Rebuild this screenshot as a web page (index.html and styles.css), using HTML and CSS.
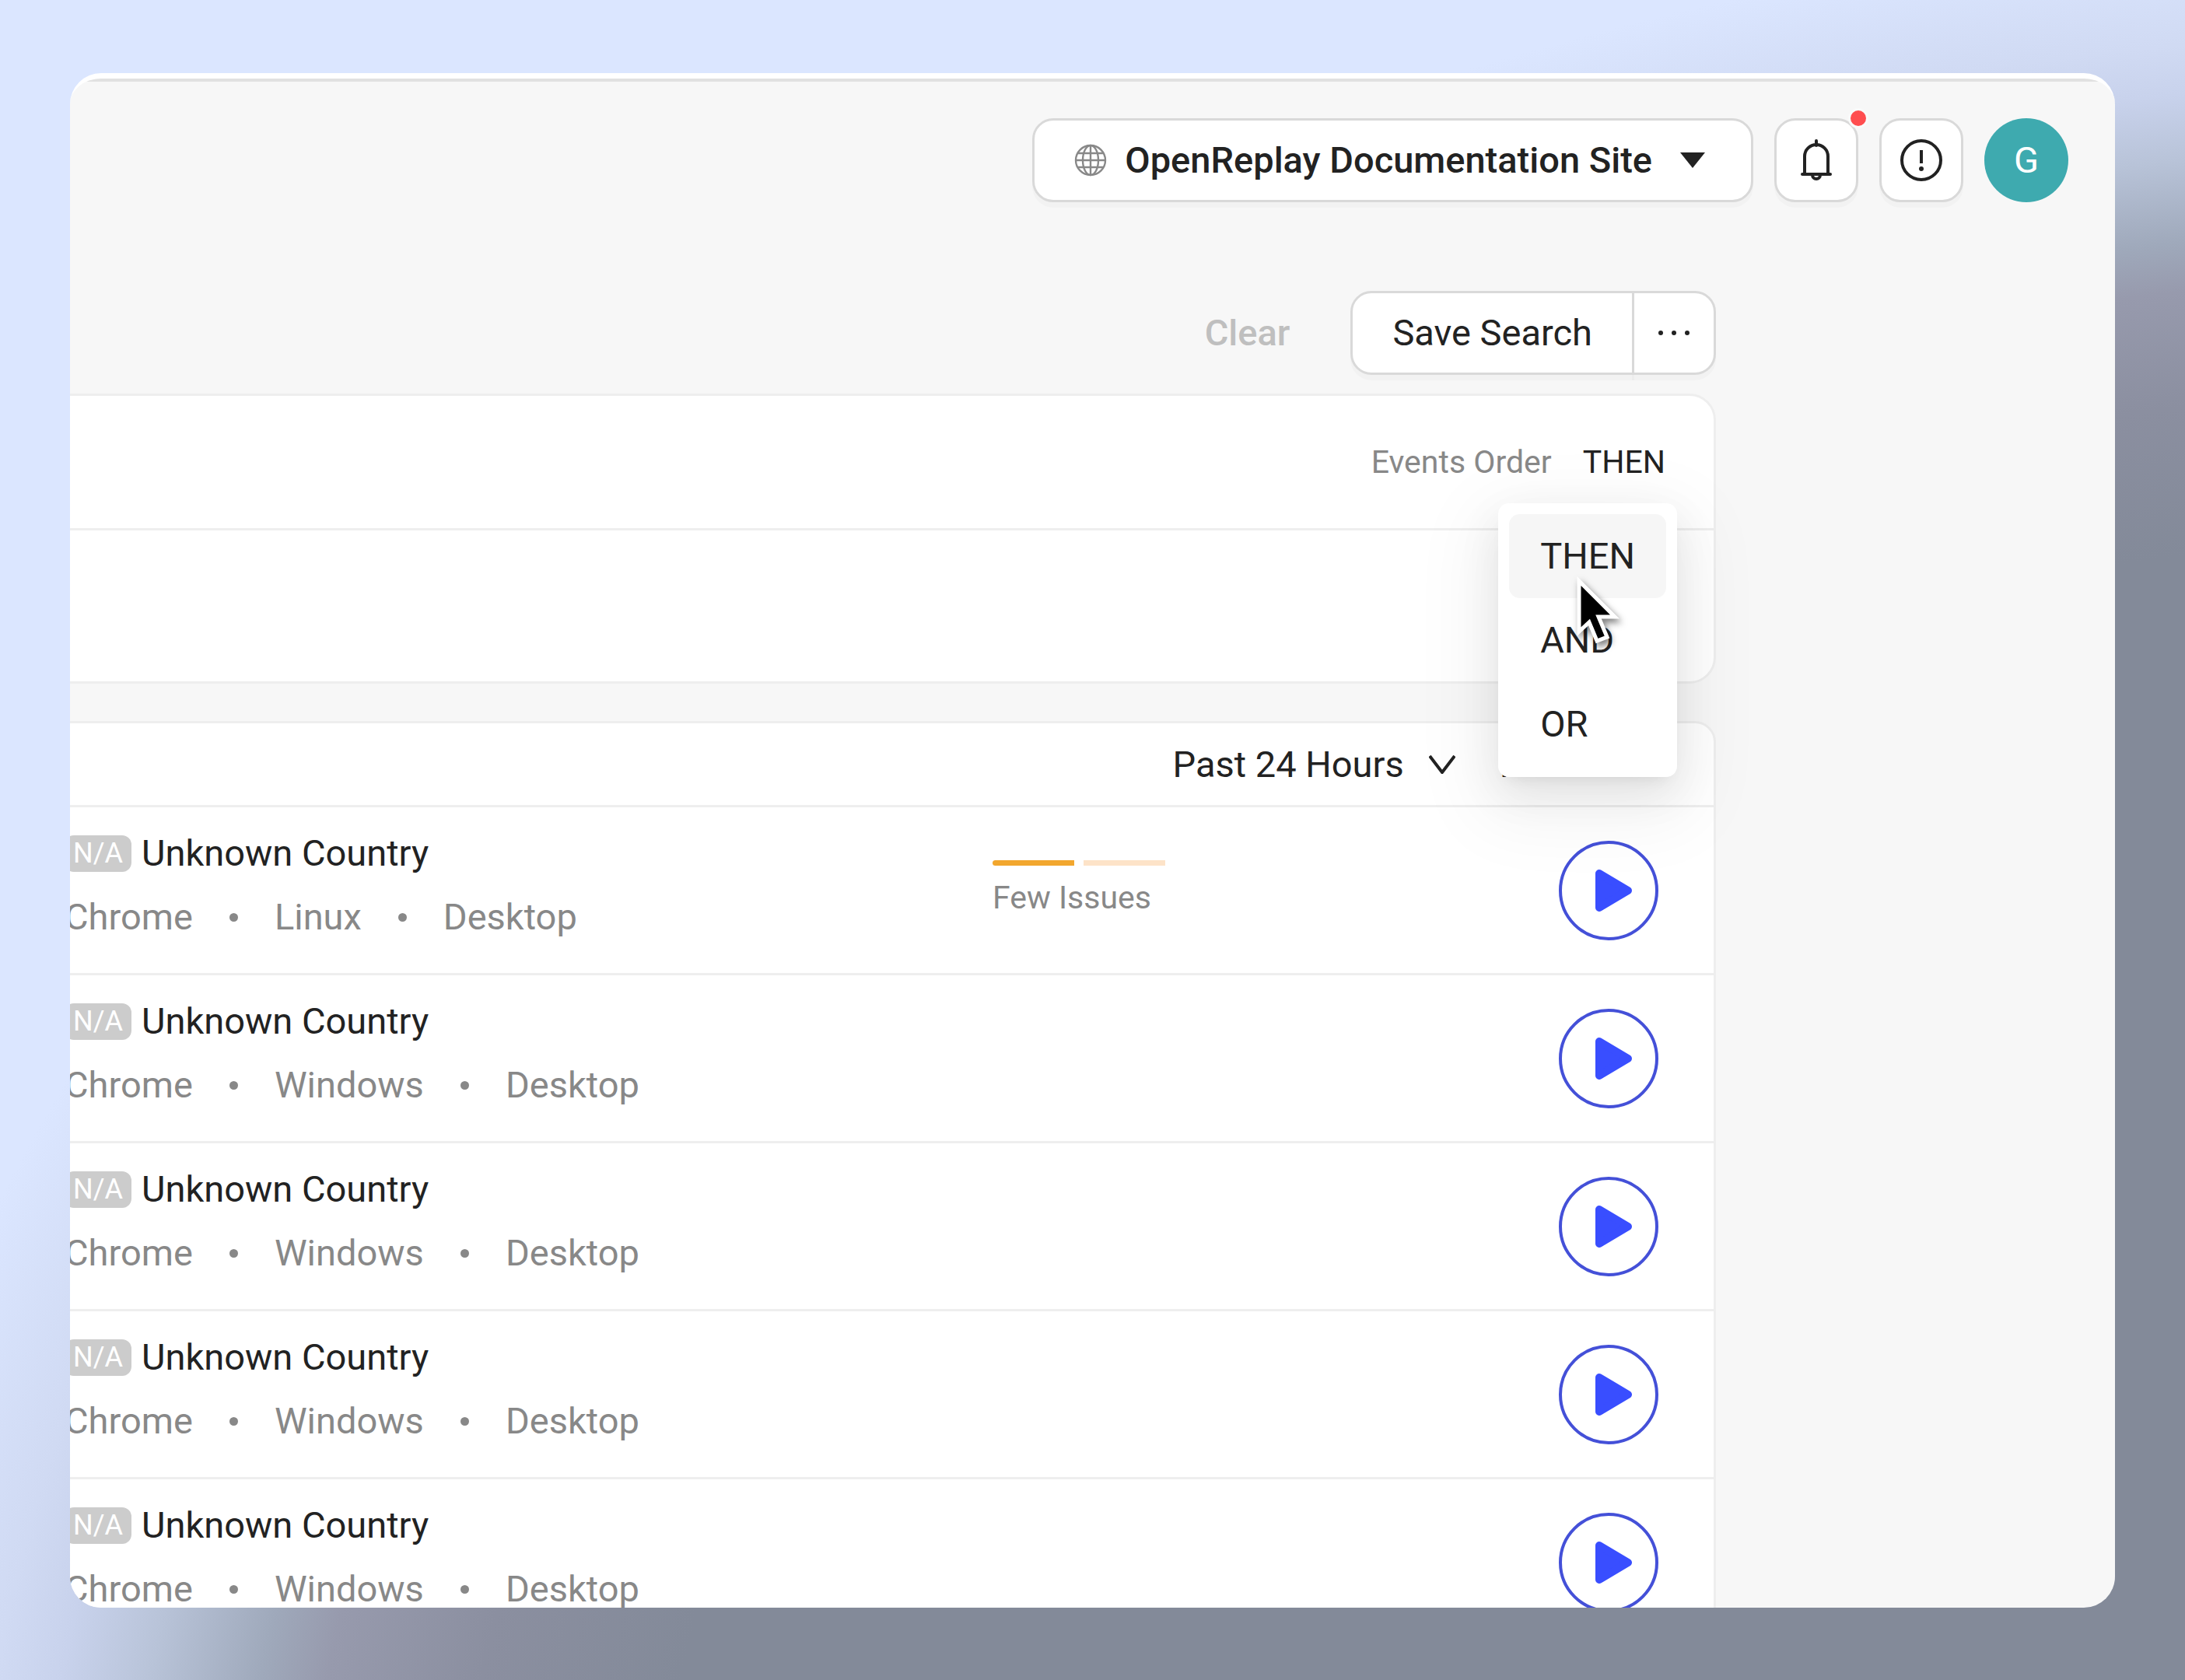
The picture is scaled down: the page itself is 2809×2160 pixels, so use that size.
FILE: index.html
```
<!DOCTYPE html>
<html lang="en">
<head>
<meta charset="utf-8">
<title>OpenReplay Sessions</title>
<link rel="stylesheet" href="styles.css">
</head>
<body>
<svg class="sprite" aria-hidden="true">
  <symbol id="play" viewBox="0 0 128 128">
    <circle cx="64" cy="64" r="62" fill="none" stroke="#4450d8" stroke-width="4"/>
    <path d="M52 42 89 64 52 86Z" fill="#394eff" stroke="#394eff" stroke-width="10" stroke-linejoin="round"/>
  </symbol>
</svg>
<div class="window">
  <header class="topbar">
    <button class="btn project" type="button">
      <svg class="globe" viewBox="0 0 42 42" aria-hidden="true">
        <g fill="none" stroke="#888" stroke-width="2.4">
          <circle cx="21" cy="21" r="19"/>
          <ellipse cx="21" cy="21" rx="10" ry="19"/>
          <path d="M21 2v38M2 21h38M5 12h32M5 30h32"/>
        </g>
      </svg>
      <span>OpenReplay Documentation Site</span>
      <svg class="caret" viewBox="0 0 34 22" aria-hidden="true"><path d="M1 1h32L17 21Z" fill="#222"/></svg>
    </button>
    <button class="btn square" type="button" aria-label="Notifications">
      <svg class="icon" viewBox="0 0 54 54" aria-hidden="true">
        <g fill="none" stroke="#222" stroke-width="4">
          <path d="M12 45V22a15 15 0 0 1 30 0v23M27 2v6" stroke-linecap="round"/>
          <path d="M9 45h36" stroke-linecap="round"/>
          <path d="M22 46a5 5 0 0 0 10 0"/>
        </g>
      </svg>
      <span class="badge"></span>
    </button>
    <button class="btn square" type="button" aria-label="Help">
      <svg class="icon" viewBox="0 0 54 54" aria-hidden="true">
        <circle cx="27" cy="27" r="25" fill="none" stroke="#222" stroke-width="4"/>
        <path d="M25 14h4v17h-4z" fill="#222"/>
        <circle cx="27" cy="38" r="3" fill="#222"/>
      </svg>
    </button>
    <button class="avatar" type="button">G</button>
  </header>

  <main class="content">
    <div class="actions">
      <button class="clear" type="button" disabled>Clear</button>
      <div class="split">
        <button class="btn save" type="button">Save Search</button>
        <button class="btn more" type="button" aria-label="More">
          <svg viewBox="0 0 44 8" aria-hidden="true"><g fill="#222"><circle cx="5" cy="4" r="3"/><circle cx="22" cy="4" r="3"/><circle cx="39" cy="4" r="3"/></g></svg>
        </button>
      </div>
    </div>

    <section class="card filters">
      <div class="filters-head">
        <span class="muted">Events Order</span>
        <div class="order">
          <button class="order-value" type="button">THEN</button>
          <div class="menu">
            <button class="option selected" type="button">THEN</button>
            <button class="option" type="button">AND</button>
            <button class="option" type="button">OR</button>
            <svg class="cursor" viewBox="0 0 66 96" aria-hidden="true">
              <path d="M3 6 49 52H28L39 78 26 83 16 59 3 71Z" fill="#000" stroke="#fff" stroke-width="5"/>
            </svg>
          </div>
        </div>
      </div>
      <div class="filters-body"></div>
    </section>

    <section class="card sessions">
      <div class="sessions-head">
        <button class="drop" type="button">Past 24 Hours
          <svg viewBox="0 0 34 24" aria-hidden="true"><path d="M1 1 17 22 33 1" fill="none" stroke="#222" stroke-width="4"/></svg>
        </button>
        <button class="drop" type="button">Newest
          <svg viewBox="0 0 34 24" aria-hidden="true"><path d="M1 1 17 22 33 1" fill="none" stroke="#222" stroke-width="4"/></svg>
        </button>
      </div>
      <article class="row">
        <div class="info">
          <div class="place"><span class="flag">N/A</span>Unknown Country</div>
          <div class="meta"><span>Chrome</span><i class="sep"></i><span>Linux</span><i class="sep"></i><span>Desktop</span></div>
        </div>
        <div class="issues">
          <div class="bars"><span class="bar on"></span><span class="bar"></span></div>
          <span class="muted">Few Issues</span>
        </div>
        <a class="play" href="#" aria-label="Play"><svg viewBox="0 0 128 128"><use href="#play"/></svg></a>
      </article>
      <article class="row">
        <div class="info">
          <div class="place"><span class="flag">N/A</span>Unknown Country</div>
          <div class="meta"><span>Chrome</span><i class="sep"></i><span>Windows</span><i class="sep"></i><span>Desktop</span></div>
        </div>
        <a class="play" href="#" aria-label="Play"><svg viewBox="0 0 128 128"><use href="#play"/></svg></a>
      </article>
      <article class="row">
        <div class="info">
          <div class="place"><span class="flag">N/A</span>Unknown Country</div>
          <div class="meta"><span>Chrome</span><i class="sep"></i><span>Windows</span><i class="sep"></i><span>Desktop</span></div>
        </div>
        <a class="play" href="#" aria-label="Play"><svg viewBox="0 0 128 128"><use href="#play"/></svg></a>
      </article>
      <article class="row">
        <div class="info">
          <div class="place"><span class="flag">N/A</span>Unknown Country</div>
          <div class="meta"><span>Chrome</span><i class="sep"></i><span>Windows</span><i class="sep"></i><span>Desktop</span></div>
        </div>
        <a class="play" href="#" aria-label="Play"><svg viewBox="0 0 128 128"><use href="#play"/></svg></a>
      </article>
      <article class="row">
        <div class="info">
          <div class="place"><span class="flag">N/A</span>Unknown Country</div>
          <div class="meta"><span>Chrome</span><i class="sep"></i><span>Windows</span><i class="sep"></i><span>Desktop</span></div>
        </div>
        <a class="play" href="#" aria-label="Play"><svg viewBox="0 0 128 128"><use href="#play"/></svg></a>
      </article>
    </section>
  </main>
</div>
</body>
</html>
```
FILE: styles.css
```
* { box-sizing: border-box; }

body {
  margin: 0;
  height: 100vh;
  padding: 94px 90px 93px;
  background: #dbe6ff radial-gradient(100% 97% at 114% 113.4%,
    #838a99 84%, #8b8fa0 93%, #979aad 100%, #9fa9bb 103%, #b8c3d8 108%, #c8d2ec 112%, #d0daf3 115%, #dbe6ff 122%);
  font-family: Roboto, "Liberation Sans", sans-serif;
  font-size: 47px;
  line-height: 74px;
  color: #222;
}

button {
  margin: 0;
  padding: 0;
  border: 0;
  background: none;
  font: inherit;
  color: inherit;
}

svg { display: block; flex: none; }
.sprite { position: absolute; width: 0; height: 0; }

.window {
  height: 100%;
  overflow: hidden;
  border-radius: 40px;
  border-top: 7px solid #fff;
  background: #f7f7f7;
}

/* top bar */
.topbar {
  display: flex;
  justify-content: flex-end;
  gap: 27px;
  padding: 47px 60px 0;
  border-top: 4px solid #e1e1e1;
}

.btn {
  display: flex;
  align-items: center;
  justify-content: center;
  height: 108px;
  border: 3px solid #d9d9d9;
  border-radius: 27px;
  background: #fff;
  box-shadow: 0 7px 0 rgba(0, 0, 0, 0.02);
}

.project { padding: 0 58px 0 51px; font-weight: 500; }
.globe { width: 42px; height: 42px; margin-right: 23px; }
.caret { width: 34px; height: 22px; margin-left: 35px; }

.square { position: relative; width: 108px; }
.icon { width: 54px; height: 54px; }
.badge {
  position: absolute;
  top: -16px;
  right: -16px;
  width: 26px;
  height: 26px;
  border: 3px solid #fafafa;
  border-radius: 50%;
  background: #ff4d4f;
}

.avatar {
  width: 108px;
  height: 108px;
  border-radius: 50%;
  background: #3eaaaf;
  color: #fff;
}

/* search actions */
.content { margin: 114px 513px 0 -60px; }

.actions {
  display: flex;
  justify-content: flex-end;
  align-items: center;
  gap: 78px;
}
.clear { color: #bfbfbf; font-weight: 500; }
.split { display: flex; }
.save { padding: 0 51px; border-radius: 27px 0 0 27px; }
.more { width: 108px; margin-left: -3px; border-radius: 0 27px 27px 0; }
.more svg { width: 44px; height: 8px; }

.card {
  margin-top: 24px;
  border: 3px solid #eee;
  border-radius: 34px;
  background: #fff;
}
.muted { color: #888; font-size: 41px; }

.filters-head {
  display: flex;
  justify-content: flex-end;
  align-items: center;
  gap: 40px;
  padding: 48px 62px 48px 0;
  border-bottom: 3px solid #eee;
}
.order { position: relative; }
.order-value { display: block; font-size: 41px; }
.filters-body { height: 194px; }

/* order dropdown */
.menu {
  position: absolute;
  z-index: 2;
  top: 90px;
  right: -15px;
  padding: 14px;
  border-radius: 14px;
  background: #fff;
  box-shadow: 0 20px 54px rgba(0, 0, 0, 0.08), 0 10px 20px -13px rgba(0, 0, 0, 0.12), 0 30px 94px 27px rgba(0, 0, 0, 0.05);
}
.option {
  display: block;
  width: 100%;
  padding: 17px 40px;
  border-radius: 14px;
  text-align: left;
}
.selected { background: #f6f6f6; }
.cursor {
  position: absolute;
  top: 94px;
  left: 101px;
  width: 66px;
  height: 96px;
  filter: drop-shadow(3px 5px 4px rgba(0, 0, 0, 0.5));
}

/* session list */
.sessions { margin-top: 48px; border-radius: 27px; }
.sessions-head {
  display: flex;
  justify-content: flex-end;
  gap: 57px;
  padding: 16px 51px 15px;
  border-bottom: 3px solid #eee;
}
.drop { display: flex; align-items: center; gap: 32px; }
.drop svg { width: 34px; height: 24px; }

.row {
  display: flex;
  align-items: flex-start;
  padding: 22px 71px 35px 50px;
  border-bottom: 3px solid #eee;
}
.sessions-head .drop:last-child { line-height: 72px; }
.info { flex: 0 0 1193px; }
.place, .meta { display: flex; align-items: center; }
.meta { margin-top: 8px; color: #888; }
.flag {
  margin-right: 13px;
  padding: 0 11px;
  border-radius: 12px;
  background: #ccc;
  color: #fff;
  font-size: 36px;
  line-height: 47px;
}
.sep {
  width: 11px;
  height: 11px;
  margin: 0 47px;
  border-radius: 50%;
  background: #888;
}
.issues { padding-top: 46px; }
.bars { display: flex; gap: 12px; }
.bar { width: 105px; height: 7px; background: #fde3c8; }
.bar.on { border-radius: 4px 0 0 4px; background: #f2a72e; }
.issues .muted { display: block; margin-top: 4px; }
.play { margin: 21px 0 0 auto; }
.play svg { width: 128px; height: 128px; }
```
